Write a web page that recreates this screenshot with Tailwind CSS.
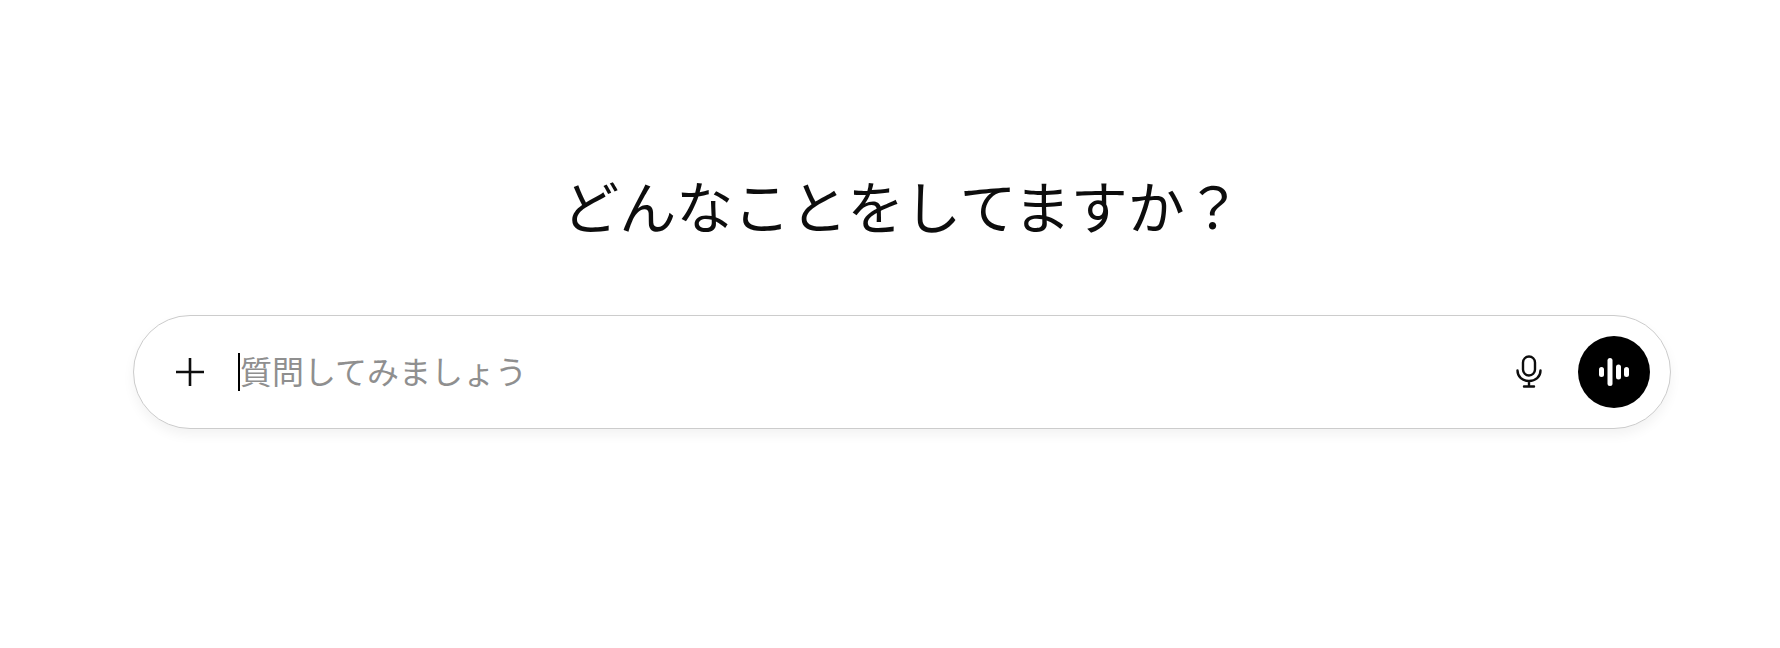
<!DOCTYPE html>
<html lang="ja">
<head>
  <meta charset="UTF-8">
  <title>ChatGPT</title>
  <script src="https://cdn.jsdelivr.net/npm/@tailwindcss/browser@4"></script>
</head>
<body class="bg-white font-['Noto_Sans_CJK_JP',sans-serif]">

<div class="h-[648px] pl-[24px] flex flex-col items-center">
  <!-- Heading -->
  <h1 class="mt-[169px] h-[70px] leading-[70px] text-[57px] font-normal text-[#0d0d0d] text-center">どんなことをしてますか？</h1>

  <!-- Prompt box -->
  <div class="mt-[75.500px] w-[1538px] h-[114px] bg-white border border-[#cccccc] rounded-[57px] shadow-[0_6px_12px_rgba(0,0,0,0.05)] flex items-center pl-[39px] pr-[20px]">
    <button class="w-[34px] h-[34px] flex items-center justify-center">
      <svg width="30" height="30" viewBox="0 0 30 30" fill="none" stroke="#0d0d0d" stroke-width="2.6"><path d="M15 1v28M1 15h28"/></svg>
    </button>
    <div class="ml-[31px] flex-1 flex items-center">
      <span class="w-[2px] h-[38px] bg-black"></span>
      <span class="text-[32px] leading-[38px] mb-[4px] font-normal text-[#8f8f8f]">質問してみましょう</span>
    </div>
    <button class="w-[32px] h-[40px] flex items-center justify-center mr-[33px]">
      <svg width="26" height="33" viewBox="0 0 26 33" fill="none" stroke="#0d0d0d" stroke-width="2.4" stroke-linecap="round">
        <rect x="7" y="1.500" width="12" height="19" rx="6"/>
        <path d="M1.500 15.500c0 6.500 5 10.500 11.500 10.500s11.500-4 11.500-10.500M13 26v5.500M8 31.500h10"/>
      </svg>
    </button>
    <button class="w-[72px] h-[72px] rounded-full bg-black flex items-center justify-center">
      <svg width="30" height="28" viewBox="0 0 30 28" fill="white">
        <rect x="0" y="9" width="5" height="10" rx="2.500"/>
        <rect x="8.500" y="0" width="5" height="28" rx="2.500"/>
        <rect x="17" y="6.500" width="5" height="15" rx="2.500"/>
        <rect x="25" y="9" width="5" height="10" rx="2.500"/>
      </svg>
    </button>
  </div>
</div>

</body>
</html>
